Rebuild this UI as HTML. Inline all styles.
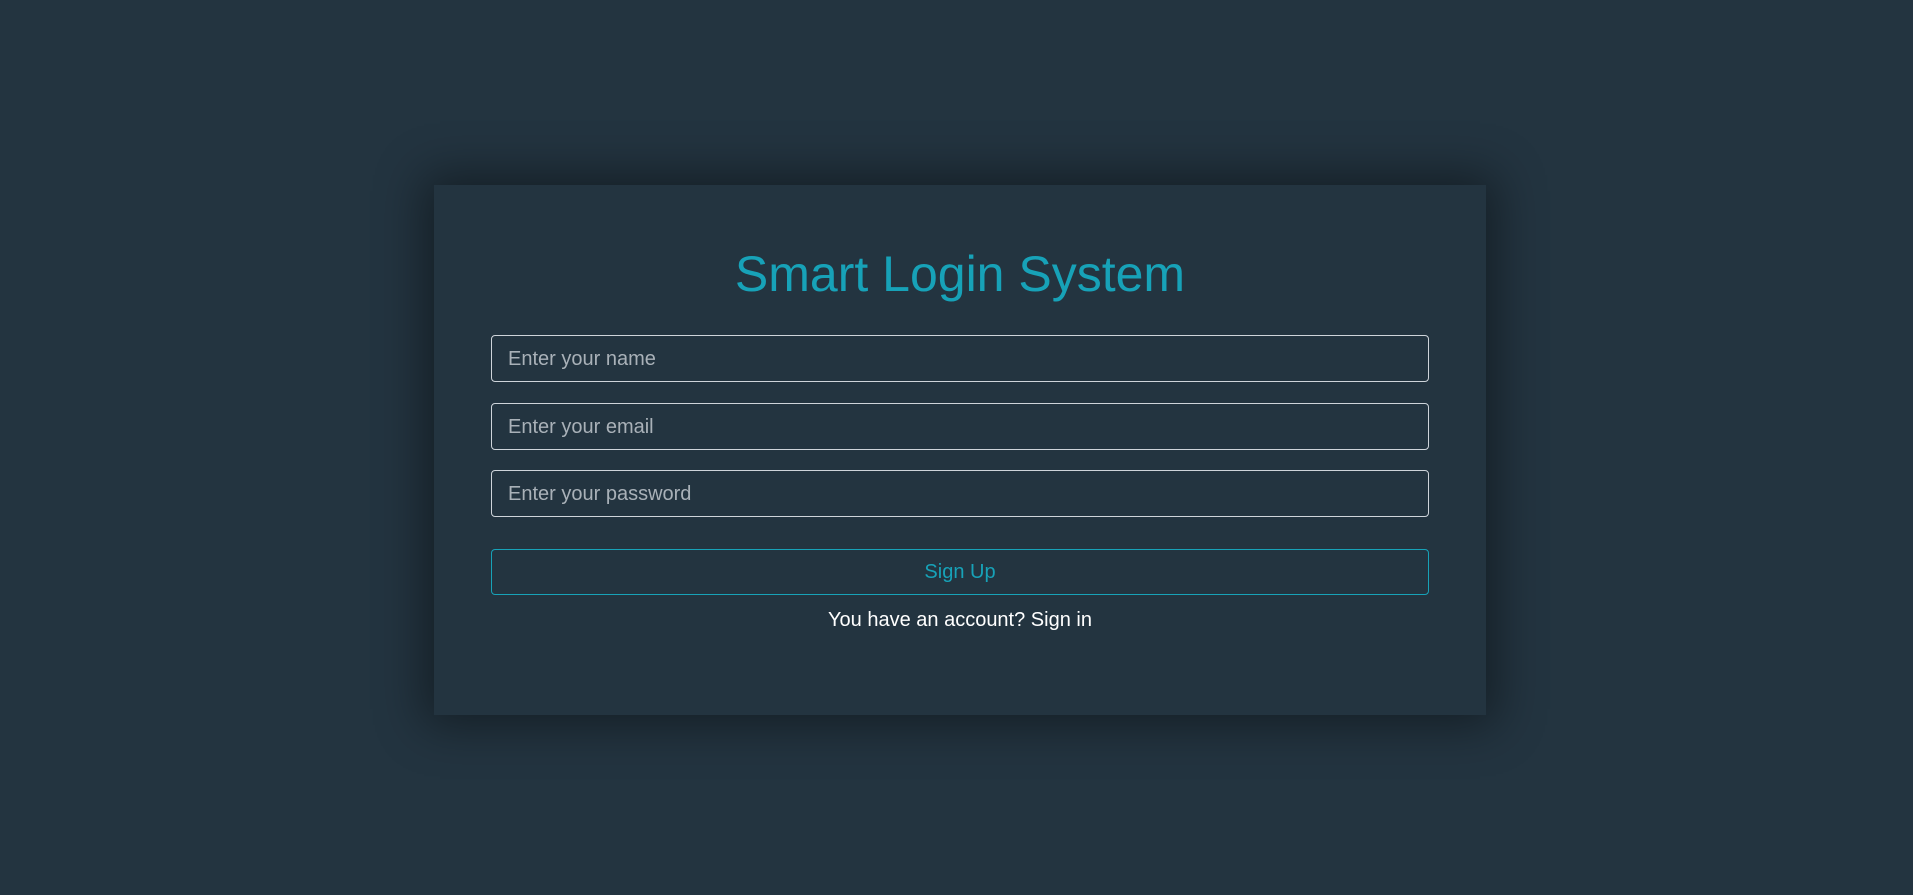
<!DOCTYPE html>
<html><head><style>
html,body{margin:0;padding:0;width:1913px;height:895px;background:#233440;overflow:hidden;font-family:"Liberation Sans",Arial,sans-serif}
.card{position:absolute;left:434px;top:185px;width:1052px;height:530px;background:#233440;box-shadow:0 0 45px 10px rgba(0,0,0,0.42)}
h1{position:absolute;left:7px;right:0;top:244px;margin:0;text-align:center;font-weight:normal;font-size:50px;line-height:60px;color:#17a2b8}
.in{position:absolute;left:491px;width:938px;border:1px solid #ced4da;border-radius:4px;box-sizing:border-box;height:47px;color:#a9b1b8;font-size:20px;line-height:47px;padding-left:16px}
.btn{position:absolute;left:491px;top:549px;width:938px;height:46px;box-sizing:border-box;border:1px solid #17a2b8;border-radius:4px;color:#17a2b8;font-size:20px;text-align:center;line-height:44px}
.t{position:absolute;left:7px;right:0;top:608px;text-align:center;color:#fff;font-size:20px;line-height:24px}
</style></head><body>
<div class="card"></div>
<h1>Smart Login System</h1>
<div class="in" style="top:335px">Enter your name</div>
<div class="in" style="top:403px">Enter your email</div>
<div class="in" style="top:470px">Enter your password</div>
<div class="btn">Sign Up</div>
<div class="t">You have an account? Sign in</div>
</body></html>
